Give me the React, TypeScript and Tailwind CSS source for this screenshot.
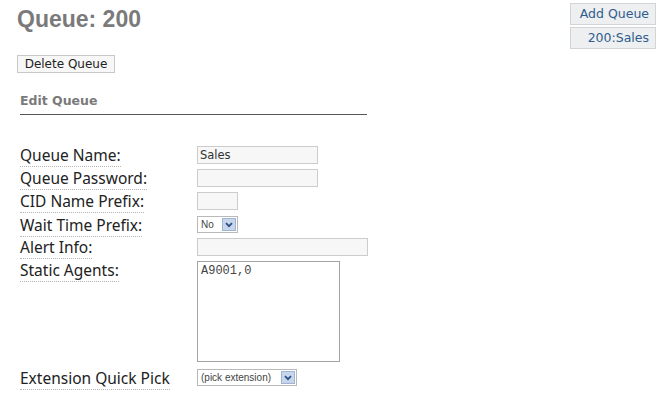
import React from "react";

const labelFont = { fontFamily: '"DejaVu Sans", sans-serif' };

function Label({ children }: { children: React.ReactNode }) {
    return (
        <span
            className="border-b border-dotted border-[#b5b5b5] text-[15.5px] leading-[17px] text-[#222]"
            style={{ fontFamily: '"Noto Sans", sans-serif' }}
        >
            {children}
        </span>
    );
}

function FakeSelect({ text, width }: { text: string; width: string }) {
    return (
        <div className={`flex items-center justify-between h-[17px] border border-[#b9b9b9] bg-white pl-[3px] pr-[1px] ${width}`}>
            <span
                className="text-[10px] text-[#444] leading-none whitespace-nowrap"
                style={{ fontFamily: '"Liberation Sans", Arial, sans-serif' }}
            >
                {text}
            </span>
            <span className="flex items-center justify-center w-[14px] h-[13px] bg-[#c7d6ea] border border-[#9fb4d2]">
                <svg width="8" height="6" viewBox="0 0 8 6">
                    <path d="M1 1.2 L4 4.2 L7 1.2" fill="none" stroke="#2b4f86" strokeWidth="1.8" />
                </svg>
            </span>
        </div>
    );
}

export default function App() {
    return (
        <div className="w-[656px] h-[413px] bg-white flex" style={{ fontFamily: '"Liberation Sans", Arial, sans-serif' }}>
            {/* Main */}
            <div className="flex-1 pl-[17px]">
                <h1 className="pt-[5px] text-[23px] leading-[28px] font-bold text-[#7a7a7a]">Queue: 200</h1>

                <button
                    className="mt-[22px] block w-[98px] h-[18px] border border-[#c8c8c8] bg-[#f7f7f7] text-[12px] leading-none text-[#222]"
                    style={labelFont}
                >
                    Delete Queue
                </button>

                <div className="mt-[15px] ml-[3px] w-[347px] border-b border-[#555] pb-[2px]">
                    <span className="text-[12.5px] font-bold text-[#7a7a7a]" style={labelFont}>Edit Queue</span>
                </div>

                {/* Form */}
                <div className="mt-[31px] ml-[3px] flex flex-col" style={labelFont}>
                    <div className="flex items-start h-[23px]">
                        <div className="w-[177px] -mt-[2px]"><Label>Queue Name:</Label></div>
                        <div className="w-[121px] h-[18px] border border-[#cccccc] bg-[#f7f7f7] px-[2px] text-[11.5px] leading-[16px] text-[#333]">Sales</div>
                    </div>
                    <div className="flex items-start h-[23px]">
                        <div className="w-[177px] -mt-[2px]"><Label>Queue Password:</Label></div>
                        <div className="w-[121px] h-[18px] border border-[#cccccc] bg-[#f7f7f7]" />
                    </div>
                    <div className="flex items-start h-[24px]">
                        <div className="w-[177px] -mt-[2px]"><Label>CID Name Prefix:</Label></div>
                        <div className="w-[41px] h-[18px] border border-[#cccccc] bg-[#f7f7f7]" />
                    </div>
                    <div className="flex items-start h-[22px]">
                        <div className="w-[177px] -mt-[2px]"><Label>Wait Time Prefix:</Label></div>
                        <FakeSelect text="No" width="w-[41px]" />
                    </div>
                    <div className="flex items-start h-[23px]">
                        <div className="w-[177px] -mt-[2px]"><Label>Alert Info:</Label></div>
                        <div className="w-[171px] h-[18px] border border-[#cccccc] bg-[#f7f7f7]" />
                    </div>
                    <div className="flex items-start h-[108px]">
                        <div className="w-[177px] -mt-[2px]"><Label>Static Agents:</Label></div>
                        <div
                            className="w-[143px] h-[101px] border border-[#a3a3a3] bg-white px-[3px] pt-[2px] text-[12px] leading-[14px] text-[#444]"
                            style={{ fontFamily: '"Liberation Mono", monospace' }}
                        >
                            A9001,0
                        </div>
                    </div>
                    <div className="flex items-start h-[23px]">
                        <div className="w-[177px] -mt-[2px]"><Label>Extension Quick Pick</Label></div>
                        <FakeSelect text="(pick extension)" width="w-[100px]" />
                    </div>
                </div>
            </div>

            {/* Side nav */}
            <div className="w-[86px] mt-[3px] flex flex-col gap-[2px]" style={labelFont}>
                <div className="h-[22px] bg-[#eeeff0] border border-[#d2d4d6] text-right pr-[6px] text-[12.5px] leading-[20px] text-[#2e5d8e]">Add Queue</div>
                <div className="h-[22px] bg-[#eeeff0] border border-[#d2d4d6] text-right pr-[6px] text-[12.5px] leading-[20px] text-[#2e5d8e]">200:Sales</div>
            </div>
        </div>
    );
}
